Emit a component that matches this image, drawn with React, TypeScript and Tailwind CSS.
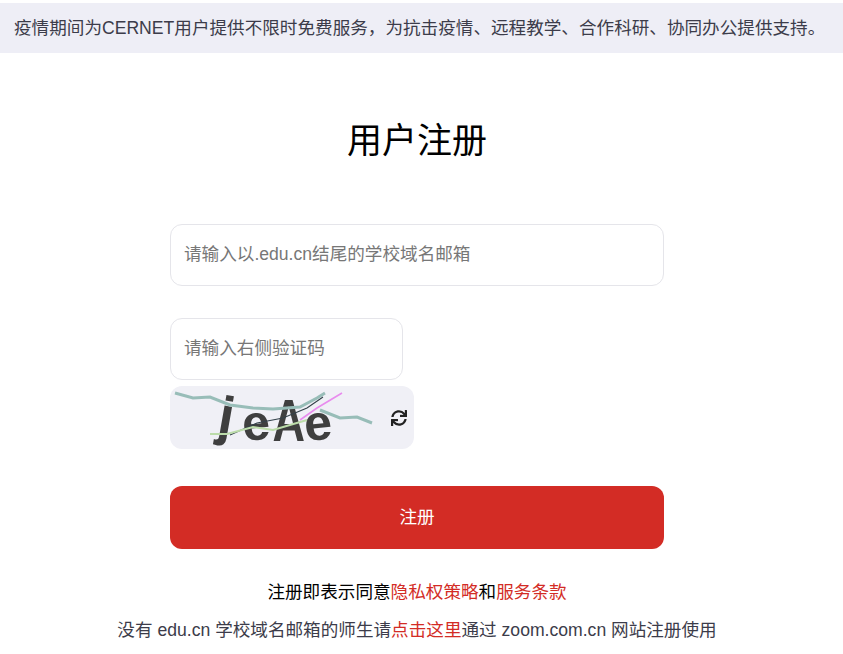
import { FaSync } from 'react-icons/fa'

const font = 'font-["Liberation_Sans","Noto_Sans_CJK_SC",sans-serif]'

function Captcha() {
  return (
    <div className="flex h-[63px] w-[244px] items-center rounded-xl bg-[#f0f0f6]">
      <div className="relative h-full w-[221px] shrink-0 font-['Liberation_Sans',sans-serif] font-bold text-[#3f3f3f] blur-[0.4px]">
        <span className="absolute left-[49px] top-[6px] rotate-[10deg] text-[55px] leading-[48px]">j</span>
        <span className="absolute left-[72px] top-[15px] -rotate-[6deg] text-[50px] leading-[44px]">e</span>
        <span className="absolute left-[97px] top-[11px] scale-x-75 text-[60px] leading-[48px]">A</span>
        <span className="absolute left-[134px] top-[15px] -rotate-[6deg] text-[50px] leading-[44px]">e</span>
        <svg className="absolute inset-0" width="221" height="63" viewBox="0 0 221 63" fill="none">
          <path d="M5 7 L23 12 L40 11 L60 19 L83 22 L103 23 L130 21 L147 12 L155 7" stroke="#98bdb8" strokeWidth="3" />
          <path d="M150 24 L170 32 L187 31 L202 37" stroke="#98bdb8" strokeWidth="3" />
          <path d="M130 34 L147 22 L172 7" stroke="#e88cee" strokeWidth="1.6" />
          <path d="M60 49 L87 37 L113 32 L137 22 L153 11" stroke="#33414a" strokeWidth="1.1" />
          <path d="M40 48 L57 48 L83 41 L103 44 L137 34" stroke="#bcdcaa" strokeWidth="2" />
        </svg>
      </div>
      <FaSync className="text-[16px] text-[#222]" />
    </div>
  )
}

export default function App() {
  return (
    <div className={`${font} h-[654px] overflow-hidden bg-white pt-[3px]`}>
      <div className="flex h-[50px] items-center whitespace-nowrap bg-[#eeeef6] pl-[14px] text-[17.6px] text-[#3c3c4a]">
        疫情期间为CERNET用户提供不限时免费服务，为抗击疫情、远程教学、合作科研、协同办公提供支持。
      </div>

      <div className="w-[834px]">
        <h1 className="mt-[65px] text-center text-[35px] leading-[46px] text-black">用户注册</h1>

        <form className="mx-auto mt-[60px] w-[494px]">
          <input
            placeholder="请输入以.edu.cn结尾的学校域名邮箱"
            className="block h-[62px] w-full rounded-xl border border-[#e5e5ea] px-[13px] pb-[2px] text-[17.6px] text-[#333] outline-none placeholder:text-[#777]"
          />
          <input
            placeholder="请输入右侧验证码"
            className="mt-[32px] block h-[62px] w-[233px] rounded-xl border border-[#e5e5ea] px-[13px] pb-[2px] text-[17.6px] text-[#333] outline-none placeholder:text-[#777]"
          />
          <div className="mt-[6px]">
            <Captcha />
          </div>
          <button type="button" className="mt-[37px] h-[63px] w-full rounded-xl bg-[#d32c25] text-[17.6px] text-white">
            注册
          </button>
        </form>

        <p className="mt-[30px] text-center text-[17.6px] leading-[26px] text-black">
          注册即表示同意<a className="text-[#d32c25]">隐私权策略</a>和<a className="text-[#d32c25]">服务条款</a>
        </p>
        <p className="mt-[12px] text-center text-[17.6px] leading-[26px] text-[#3c3c4a]">
          没有 edu.cn 学校域名邮箱的师生请<a className="text-[#d32c25]">点击这里</a>通过 zoom.com.cn 网站注册使用
        </p>
      </div>
    </div>
  )
}
